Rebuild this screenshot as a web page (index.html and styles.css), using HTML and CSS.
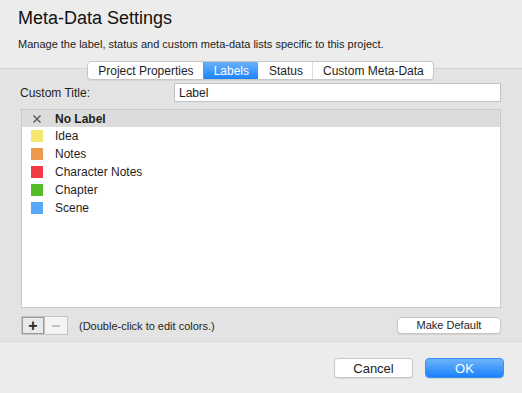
FILE: index.html
```html
<!DOCTYPE html>
<html lang="en">
<head>
  <meta charset="UTF-8" />
  <title>Meta-Data Settings</title>
  <link rel="stylesheet" href="styles.css">
</head>
<body>
  <div class="window">
    <!-- Sheet header -->
    <div class="header">
      <h1>Meta-Data Settings</h1>
      <p>Manage the label, status and custom meta-data lists specific to this project.</p>
    </div>

    <!-- Tab panel -->
    <div class="panel">
      <div class="tabs">
        <span class="tab">Project Properties</span>
        <span class="tab active">Labels</span>
        <span class="tab">Status</span>
        <span class="tab">Custom Meta-Data</span>
      </div>

      <div class="title-row">
        <label for="custom-title">Custom Title:</label>
        <input id="custom-title" class="text-field" type="text" value="Label">
      </div>

      <div class="label-list">
        <div class="row row-none">
          <svg class="x-mark" width="12" height="12" viewBox="0 0 12 12">
            <path d="M2.5 2.5 L9.5 9.5 M9.5 2.5 L2.5 9.5" stroke="#555" stroke-width="1.4" fill="none"/>
          </svg>
          <span class="row-name">No Label</span>
        </div>
        <div class="row"><span class="swatch" style="background:#f2e76f"></span><span class="row-name">Idea</span></div>
        <div class="row"><span class="swatch" style="background:#ec9a4f"></span><span class="row-name">Notes</span></div>
        <div class="row"><span class="swatch" style="background:#f03a46"></span><span class="row-name">Character Notes</span></div>
        <div class="row"><span class="swatch" style="background:#55bb26"></span><span class="row-name">Chapter</span></div>
        <div class="row"><span class="swatch" style="background:#5ba7f7"></span><span class="row-name">Scene</span></div>
      </div>

      <div class="list-tools">
        <div class="segmented">
          <span class="seg-btn">+</span>
          <span class="seg-btn disabled">&minus;</span>
        </div>
        <span class="hint">(Double-click to edit colors.)</span>
        <button class="btn btn-small">Make Default</button>
      </div>
    </div>

    <!-- Sheet buttons -->
    <div class="footer">
      <button class="btn">Cancel</button>
      <button class="btn btn-primary">OK</button>
    </div>
  </div>
</body>
</html>
```

FILE: styles.css
```css
/* Global */
html, body {
  margin: 0;
  padding: 0;
}

body {
  width: 522px;
  height: 393px;
  overflow: hidden;
  background-color: #ececec;
  font-family: "Liberation Sans", Arial, sans-serif;
  color: #1e1e1e;
}

.window {
  display: flex;
  flex-direction: column;
  height: 393px;
}

/* Header */
.header {
  padding: 6px 18px 0;
  height: 62px;
  box-sizing: border-box;
}

.header h1 {
  margin: 0;
  font-size: 18px;
  font-weight: normal;
  line-height: 24px;
  color: #111;
}

.header p {
  margin: 7px 0 0;
  font-size: 11px;
  line-height: 14px;
  color: #222;
}

/* Tab panel */
.panel {
  margin-top: 6px;
  height: 274px;
  box-sizing: border-box;
  border-top: 1px solid #d2d2d2;
  border-bottom: 1px solid #dadada;
  background-color: #e3e3e3;
  padding: 0 21px 0 20px;
  display: flex;
  flex-direction: column;
}

.tabs {
  display: flex;
  align-self: center;
  margin-top: -8px;
  height: 17px;
  border: 1px solid #c6c6c6;
  border-radius: 4px;
  background: #fff;
  box-shadow: 0 1px 0 rgba(0, 0, 0, 0.06);
  overflow: hidden;
  font-size: 12px;
}

.tab {
  display: flex;
  align-items: center;
  padding: 0 9px 0 10px;
  border-left: 1px solid #dedede;
  color: #1e1e1e;
}

.tab:first-child {
  border-left: none;
}

.tab.active {
  background: linear-gradient(#69b1fa, #1a84fb);
  color: #fff;
  border-left-color: #4a9cf8;
}

.tab.active + .tab {
  border-left-color: transparent;
}

/* Custom title row */
.title-row {
  display: flex;
  align-items: center;
  justify-content: space-between;
  margin-top: 3px;
  font-size: 12px;
}

.text-field {
  width: 327px;
  height: 19px;
  box-sizing: border-box;
  border: 1px solid #c1c1c1;
  background: #fff;
  padding: 0 4px;
  font-family: inherit;
  font-size: 12px;
  color: #1e1e1e;
  outline: none;
}

/* Label list */
.label-list {
  margin: 7px 0 0 1px;
  height: 199px;
  box-sizing: border-box;
  border: 1px solid #c9c9c9;
  background: #fff;
  font-size: 12px;
}

.row {
  display: flex;
  align-items: center;
  height: 18px;
}

.row-none {
  height: 17px;
  background: #dcdcdc;
  font-weight: bold;
}

.x-mark {
  margin: 0 12px 0 9px;
}

.swatch {
  width: 12px;
  height: 12px;
  margin: 0 12px 0 9px;
}

/* Tools below list */
.list-tools {
  display: flex;
  align-items: center;
  margin: 8px 0 0 1px;
  font-size: 11px;
}

.segmented {
  display: flex;
  height: 19px;
  border: 1px solid #c4c4c4;
  box-sizing: border-box;
  background: #f4f4f4;
}

.seg-btn {
  width: 22px;
  display: flex;
  align-items: center;
  justify-content: center;
  font-size: 16px;
  font-weight: bold;
  color: #2a2a2a;
  border-right: 1px solid #c4c4c4;
}

.seg-btn:first-child {
  background: #e9e9e9;
  box-shadow: inset 0 0 0 1px #9a9a9a;
}

.seg-btn.disabled {
  color: #bdbdbd;
  border-right: none;
}

.hint {
  margin-left: 11px;
  color: #1e1e1e;
}

/* Buttons */
.btn {
  height: 20px;
  width: 79px;
  padding: 0;
  border: 1px solid #c7c7c7;
  border-radius: 4px;
  background: #fff;
  box-shadow: 0 1px 0 rgba(0, 0, 0, 0.08);
  font-family: inherit;
  font-size: 13px;
  color: #1e1e1e;
}

.btn-small {
  margin-left: auto;
  margin-top: -1px;
  width: 104px;
  height: 17px;
  font-size: 11px;
}

.btn-primary {
  border-color: #3a8ef3;
  background: linear-gradient(#6db4fb, #1b82fb);
  color: #fff;
}

/* Footer */
.footer {
  display: flex;
  justify-content: flex-end;
  gap: 12px;
  padding: 16px 18px 0 0;
}
```
